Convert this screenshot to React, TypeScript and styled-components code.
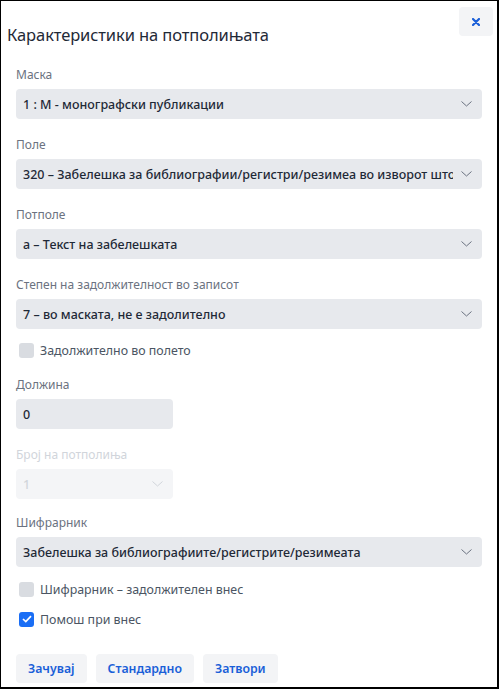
import React from "react";
import styled, { createGlobalStyle } from "styled-components";

const Global = createGlobalStyle`
  html, body { margin: 0; padding: 0; background: #fff; }
  body { font-family: "Noto Sans", "Open Sans", "DejaVu Sans", sans-serif; }
  * { box-sizing: border-box; }
`;

const Frame = styled.div`
  position: relative;
  width: 499px;
  height: 689px;
  border: 1px solid #000;
  border-right-width: 2px;
  border-bottom-width: 2px;
  background: #fff;
  padding: 0 15px 0 15px;
  display: flex;
  flex-direction: column;
`;

const Header = styled.div`
  display: flex;
  align-items: flex-start;
  justify-content: space-between;
  margin: 0 -11px 0 -9px;
  padding-top: 6px;
  height: 65px;
`;

const Title = styled.h1`
  margin: 17px 0 0 0;
  font-size: 16.5px;
  font-weight: 400;
  color: #1f2937;
  line-height: 22px;
  letter-spacing: -0.1px;
`;

const CloseBtn = styled.button`
  width: 34px;
  height: 29px;
  border: 0;
  border-radius: 4px;
  background: #f3f4f6;
  display: flex;
  align-items: center;
  justify-content: center;
  padding: 0;
`;

const Field = styled.div<{ $width?: number; $gap?: number }>`
  display: flex;
  flex-direction: column;
  width: ${(p) => (p.$width ? `${p.$width}px` : "100%")};
  margin-bottom: ${(p) => p.$gap ?? 17}px;
`;

const Label = styled.label<{ $disabled?: boolean }>`
  font-size: 12px;
  line-height: 18px;
  color: ${(p) => (p.$disabled ? "#d1d5db" : "#6b7280")};
  margin-bottom: 5px;
`;

const SelectBox = styled.div<{ $disabled?: boolean }>`
  height: 30px;
  border-radius: 4px;
  background: ${(p) => (p.$disabled ? "#f4f5f7" : "#e7e9ed")};
  display: flex;
  align-items: center;
  padding: 0 10px 0 7px;
  gap: 8px;
`;

const SelectText = styled.span<{ $disabled?: boolean }>`
  flex: 1;
  min-width: 0;
  white-space: nowrap;
  overflow: hidden;
  font-size: 12.5px;
  font-weight: 500;
  color: ${(p) => (p.$disabled ? "#d1d5db" : "#1f2937")};
`;

const InputBox = styled.div`
  height: 30px;
  border-radius: 4px;
  background: #e7e9ed;
  display: flex;
  align-items: center;
  padding: 0 7px;
  font-size: 12.5px;
  font-weight: 500;
  color: #1f2937;
`;

const CheckRow = styled.label<{ $gap?: number }>`
  display: flex;
  align-items: center;
  gap: 6px;
  padding-left: 3px;
  height: 18px;
  margin-bottom: ${(p) => p.$gap ?? 12}px;
  font-size: 12.4px;
  color: #4b5563;
`;

const Box = styled.span<{ $checked?: boolean }>`
  width: 15px;
  height: 15px;
  border-radius: 3px;
  background: ${(p) => (p.$checked ? "#1a6ef5" : "#d9dce1")};
  display: inline-flex;
  align-items: center;
  justify-content: center;
`;

const Buttons = styled.div`
  display: flex;
  gap: 9px;
  margin-top: 8px;
`;

const Btn = styled.button`
  height: 29px;
  border: 0;
  border-radius: 4px;
  background: #f3f4f6;
  color: #1a5fd8;
  font-family: inherit;
  font-size: 12.3px;
  font-weight: 600;
  padding: 0 12px;
`;

const Chevron = ({ light }: { light?: boolean }) => (
  <svg width="11" height="6" viewBox="0 0 11 6" fill="none">
    <path d="M0.5 0.5L5.5 5L10.5 0.5" stroke={light ? "#d1d5db" : "#6b7280"} strokeWidth="1" />
  </svg>
);

const Select = ({ value, disabled }: { value: string; disabled?: boolean }) => (
  <SelectBox $disabled={disabled}>
    <SelectText $disabled={disabled}>{value}</SelectText>
    <Chevron light={disabled} />
  </SelectBox>
);

const Check = ({ label, checked, gap }: { label: string; checked?: boolean; gap?: number }) => (
  <CheckRow $gap={gap}>
    <Box $checked={checked}>
      {checked && (
        <svg width="10" height="8" viewBox="0 0 10 8" fill="none">
          <path d="M1 4L3.8 6.6L9 1.2" stroke="#fff" strokeWidth="1.7" />
        </svg>
      )}
    </Box>
    {label}
  </CheckRow>
);

export default function App() {
  return (
    <>
      <Global />
      <Frame>
        <Header>
          <Title>Карактеристики на потполињата</Title>
          <CloseBtn aria-label="close">
            <svg width="8" height="8" viewBox="0 0 8 8">
              <path d="M1 1L7 7M7 1L1 7" stroke="#1a5fd8" strokeWidth="2.2" strokeLinecap="round" />
            </svg>
          </CloseBtn>
        </Header>
        <Field>
          <Label>Маска</Label>
          <Select value="1 : М - монографски публикации" />
        </Field>
        <Field>
          <Label>Поле</Label>
          <Select value="320 – Забелешка за библиографии/регистри/резимеа во изворот што го содржи" />
        </Field>
        <Field>
          <Label>Потполе</Label>
          <Select value="а – Текст на забелешката" />
        </Field>
        <Field $gap={12}>
          <Label>Степен на задолжителност во записот</Label>
          <Select value="7 – во маската, не е задолително" />
        </Field>
        <Check label="Задолжително во полето" gap={17} />
        <Field $width={157}>
          <Label>Должина</Label>
          <InputBox>0</InputBox>
        </Field>
        <Field $width={157} $gap={15}>
          <Label $disabled>Број на потполиња</Label>
          <Select value="1" disabled />
        </Field>
        <Field $gap={13}>
          <Label>Шифрарник</Label>
          <Select value="Забелешка за библиографиите/регистрите/резимеата" />
        </Field>
        <Check label="Шифрарник – задолжителен внес" />
        <Check label="Помош при внес" checked gap={18} />
        <Buttons>
          <Btn>Зачувај</Btn>
          <Btn>Стандардно</Btn>
          <Btn>Затвори</Btn>
        </Buttons>
      </Frame>
    </>
  );
}
